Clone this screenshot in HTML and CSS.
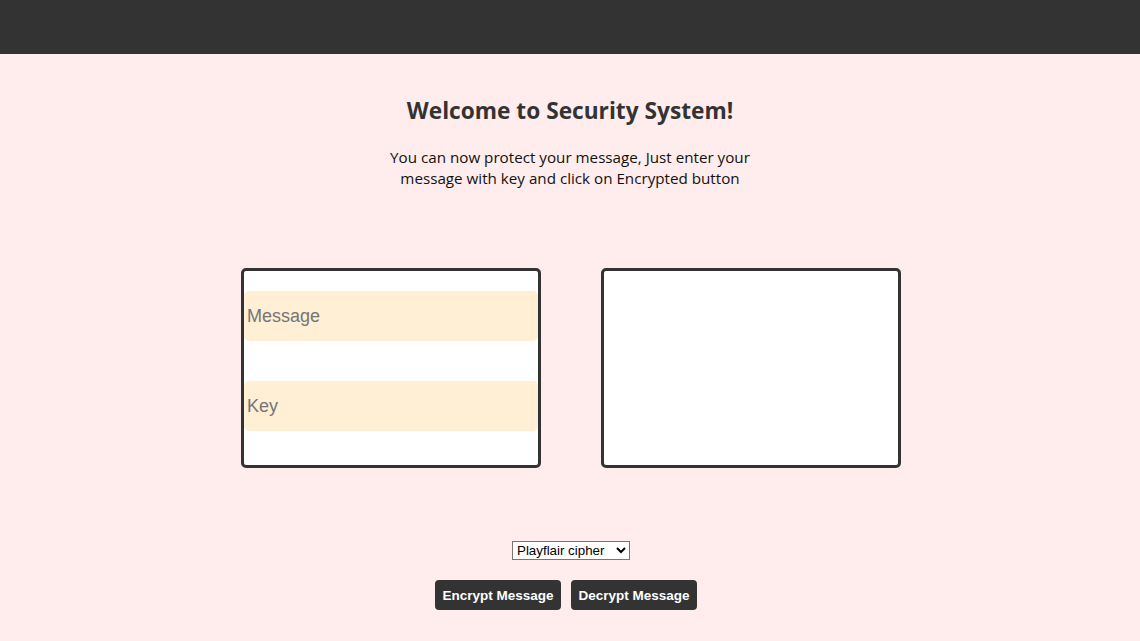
FILE: index.html
```html
<!DOCTYPE html>
<html>
<head>
<meta charset="utf-8">
<link rel="stylesheet" href="styles.css">
</head>
<body>
<header class="topbar"></header>
<main class="main">
  <h1 class="title">Welcome to Security System!</h1>
  <p class="intro">You can now protect your message, Just enter your<br>message with key and click on Encrypted button</p>
  <div class="boxes">
    <div class="box box-input">
      <input class="field" type="text" placeholder="Message">
      <input class="field" type="text" placeholder="Key">
    </div>
    <div class="box box-output"></div>
  </div>
  <div class="controls">
    <select class="cipher">
      <option>Playflair cipher</option>
    </select>
    <div class="buttons">
      <button class="btn">Encrypt Message</button>
      <button class="btn">Decrypt Message</button>
    </div>
  </div>
</main>
</body>
</html>
```
FILE: styles.css
```css
html, body {
  margin: 0;
  padding: 0;
}
body {
  background: #ffeded;
  font-family: "Open Sans", "Noto Sans", sans-serif;
  height: 641px;
  overflow: hidden;
}
.topbar {
  height: 54px;
  background: #333333;
}
.main {
  display: flex;
  flex-direction: column;
  align-items: center;
}
.title {
  margin: 41px 0 0;
  font-size: 22.7px;
  line-height: 32px;
  font-weight: 700;
  color: #333333;
}
.intro {
  margin: 20px 0 0;
  font-size: 15.2px;
  line-height: 21px;
  color: #111;
  text-align: center;
}
.boxes {
  display: flex;
  gap: 60px;
  margin-top: 79px;
  margin-left: 2px;
}
.box {
  box-sizing: border-box;
  width: 300px;
  height: 200px;
  background: #fff;
  border: 3px solid #333333;
  border-radius: 5px;
}
.box-input {
  display: flex;
  flex-direction: column;
  gap: 40px;
  padding-top: 20px;
}
.field {
  box-sizing: border-box;
  width: 294px;
  height: 50px;
  border: none;
  border-radius: 5px;
  background: #ffefd5;
  font-family: "Liberation Sans", Arial, sans-serif;
  font-size: 18px;
  padding: 0 3px;
  outline: none;
}
.field::placeholder {
  color: #757575;
}
.controls {
  display: flex;
  flex-direction: column;
  align-items: center;
  margin-top: 73px;
}
.cipher {
  font-family: "Liberation Sans", Arial, sans-serif;
  font-size: 13.33px;
  height: 19px;
  width: 118px;
  margin-left: 2px;
  background: #fff;
  border: 1px solid #767676;
  border-radius: 0;
  padding: 0;
  color: #000;
}
.buttons {
  display: flex;
  gap: 10px;
  margin-top: 20px;
  margin-right: 8px;
}
.btn {
  box-sizing: border-box;
  width: 126px;
  height: 30px;
  background: #333333;
  color: #fff;
  border: none;
  border-radius: 4px;
  font-family: "Liberation Sans", Arial, sans-serif;
  font-weight: 700;
  font-size: 13.5px;
  padding: 0;
}
```
